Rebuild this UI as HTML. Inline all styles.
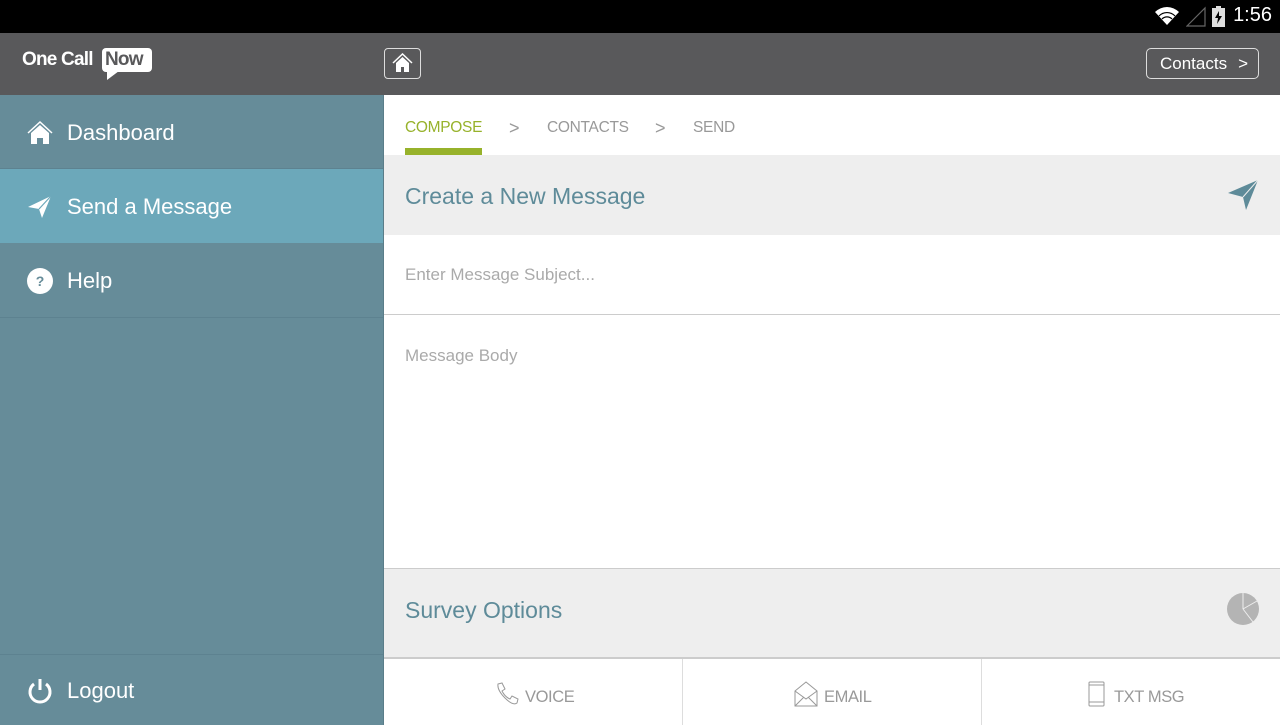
<!DOCTYPE html>
<html><head><style>
*{margin:0;padding:0;box-sizing:border-box}
body{width:1280px;height:725px;overflow:hidden;font-family:"Liberation Sans",sans-serif;position:relative;background:#fff}
.abs{position:absolute}
.side{left:0;top:95px;width:384px;height:630px;background:#668c99;border-right:1px solid #5a7d89}
.item{position:absolute;left:0;width:383px;color:#fff;font-size:22px;display:flex;align-items:center;padding-left:67px;padding-top:2px;border-bottom:1px solid #5d8290}
.item svg{position:absolute;left:27px}
.g{color:#999}
</style></head><body>
<div class="abs" style="left:0;top:0;width:1280px;height:33px;background:#000"></div>
<div class="abs" style="right:8px;top:4px;color:#fff;font-size:20px;display:flex;align-items:center;gap:6px">
<svg width="26" height="22" viewBox="0 0 26 22"><path d="M1 7 A17 17 0 0 1 25 7 L13 20Z" fill="#fff"/><path d="M5 11A11 11 0 0 1 21 11" stroke="#000" stroke-width="1.2" fill="none"/><path d="M8 14A7 7 0 0 1 18 14" stroke="#000" stroke-width="1.2" fill="none"/></svg>
<svg width="20" height="22" viewBox="0 0 20 22"><path d="M1 21L19 3V21Z" fill="none" stroke="#666" stroke-width="1.2"/></svg>
<svg width="13" height="22" viewBox="0 0 13 22"><rect x="4" y="1" width="5" height="3" fill="#ddd"/><rect x="0" y="3" width="13" height="19" fill="#ddd"/><path d="M7 6L3 13H6L5 19L10 11H7Z" fill="#000"/></svg>
<span style="margin-left:2px">1:56</span></div>
<div class="abs" style="left:0;top:33px;width:1280px;height:62px;background:#59595b"></div>
<div class="abs" style="left:22px;top:49px;color:#fff;font-weight:bold;font-size:19px;letter-spacing:-0.8px">One Call</div>
<div class="abs" style="left:102px;top:48px;width:50px;height:24px;background:#fff;border-radius:4px;color:#59595b;font-weight:bold;font-size:19px;line-height:24px;padding-left:3px;letter-spacing:-0.8px">Now</div>
<div class="abs" style="left:107px;top:71px;width:0;height:0;border-top:9px solid #fff;border-right:12px solid transparent"></div>
<div class="abs" style="left:384px;top:48px;width:37px;height:31px;border:1.5px solid #ddd;border-radius:4px"></div>
<svg class="abs" style="left:392px;top:53px" width="21" height="20" viewBox="0 0 21 20"><path d="M1 10L10.5 1L20 10" stroke="#fff" stroke-width="1.5" fill="none"/><path d="M4 10L10.5 4L17 10V19H12V14H9V19H4Z" fill="#fff"/></svg>
<div class="abs" style="left:1146px;top:48px;width:113px;height:31px;border:1.5px solid #ddd;border-radius:5px;color:#fff;font-size:17px;line-height:29px;padding-left:13px">Contacts <span style="position:absolute;right:10px;top:0">&gt;</span></div>

<div class="abs side">
<div class="item" style="top:0;height:74px"><svg width="26" height="26" viewBox="0 0 26 26"><path d="M1 13L13 2L25 13" stroke="#fff" stroke-width="1.5" fill="none"/><path d="M4 13L13 5L22 13V24H16V18H10V24H4Z" fill="#fff"/></svg>Dashboard</div>
<div class="item" style="top:74px;height:74px;background:#6ca8ba;border-bottom:none"><svg width="26" height="26" viewBox="0 0 26 26"><path d="M1 13L24 2L15 24L12 15Z" fill="#fff"/><path d="M12 15L24 2" stroke="#6ca8ba" stroke-width="1.2"/></svg>Send a Message</div>
<div class="item" style="top:148px;height:75px"><svg width="26" height="26" viewBox="0 0 26 26"><circle cx="13" cy="13" r="13" fill="#fff"/><text x="13" y="18" font-size="14" font-weight="bold" text-anchor="middle" fill="#668c99" font-family="Liberation Sans">?</text></svg>Help</div>
<div class="item" style="top:559px;height:71px;border-top:1px solid #5d8290;border-bottom:none"><svg width="26" height="28" viewBox="0 0 26 28"><path d="M7 7A10 10 0 1 0 19 7" stroke="#fff" stroke-width="3" fill="none"/><path d="M13 2V13" stroke="#fff" stroke-width="3"/></svg>Logout</div>
</div>

<div class="abs" style="left:405px;top:119px;font-size:15.5px;color:#97b22b;letter-spacing:-0.3px">COMPOSE</div>
<div class="abs" style="left:405px;top:148px;width:77px;height:7px;background:#97b22b"></div>
<div class="abs g" style="left:509px;top:118px;font-size:18px">&gt;</div>
<div class="abs g" style="left:547px;top:119px;font-size:15.5px;letter-spacing:-0.3px">CONTACTS</div>
<div class="abs g" style="left:655px;top:118px;font-size:18px">&gt;</div>
<div class="abs g" style="left:693px;top:119px;font-size:15.5px;letter-spacing:-0.3px">SEND</div>

<div class="abs" style="left:384px;top:155px;width:896px;height:80px;background:#eeeeee"></div>
<div class="abs" style="left:405px;top:183px;font-size:23px;color:#5e8b99">Create a New Message</div>
<svg class="abs" style="left:1227px;top:179px" width="32" height="32" viewBox="0 0 32 32"><path d="M1 14L31 1L19 31L16 18Z" fill="#5e8b99"/><path d="M16 18L31 1" stroke="#eee" stroke-width="1"/></svg>
<div class="abs" style="left:405px;top:265px;font-size:17px;color:#aaa">Enter Message Subject...</div>
<div class="abs" style="left:384px;top:314px;width:896px;height:1px;background:#ccc"></div>
<div class="abs" style="left:405px;top:346px;font-size:17px;color:#aaa">Message Body</div>

<div class="abs" style="left:384px;top:568px;width:896px;height:91px;background:#eeeeee;border-top:1px solid #ccc;border-bottom:2px solid #ccc"></div>
<div class="abs" style="left:405px;top:597px;font-size:23px;color:#5e8b99">Survey Options</div>
<svg class="abs" style="left:1227px;top:593px" width="32" height="32" viewBox="0 0 32 32"><circle cx="16" cy="16" r="16" fill="#b4b4b4"/><path d="M16 16V0M16 16L30 8M16 16L26 29" stroke="#eee" stroke-width="1"/></svg>

<div class="abs" style="left:682px;top:659px;width:1px;height:66px;background:#ddd"></div>
<div class="abs" style="left:981px;top:659px;width:1px;height:66px;background:#ddd"></div>
<svg class="abs" style="left:495px;top:682px" width="24" height="24" viewBox="0 0 24 24"><path d="M3 2L7 1L10 7L7 9Q10 15 15 17L17 14L23 17L22 21Q18 24 10 16Q2 8 3 2Z" fill="none" stroke="#999" stroke-width="1"/></svg>
<div class="abs g" style="left:525px;top:688px;font-size:16.5px;letter-spacing:-0.4px">VOICE</div>
<svg class="abs" style="left:794px;top:681px" width="24" height="26" viewBox="0 0 24 26"><path d="M1 10L12 1L23 10V25H1Z M1 10L12 18L23 10 M1 25L10 16 M23 25L14 16" fill="none" stroke="#999" stroke-width="1"/></svg>
<div class="abs g" style="left:824px;top:688px;font-size:16.5px;letter-spacing:-0.4px">EMAIL</div>
<svg class="abs" style="left:1088px;top:681px" width="18" height="26" viewBox="0 0 18 26"><rect x="1" y="1" width="15" height="24" rx="1" fill="none" stroke="#999"/><path d="M1 4H16M1 21H16" stroke="#999"/></svg>
<div class="abs g" style="left:1114px;top:688px;font-size:16.5px;letter-spacing:-0.4px">TXT MSG</div>
</body></html>
